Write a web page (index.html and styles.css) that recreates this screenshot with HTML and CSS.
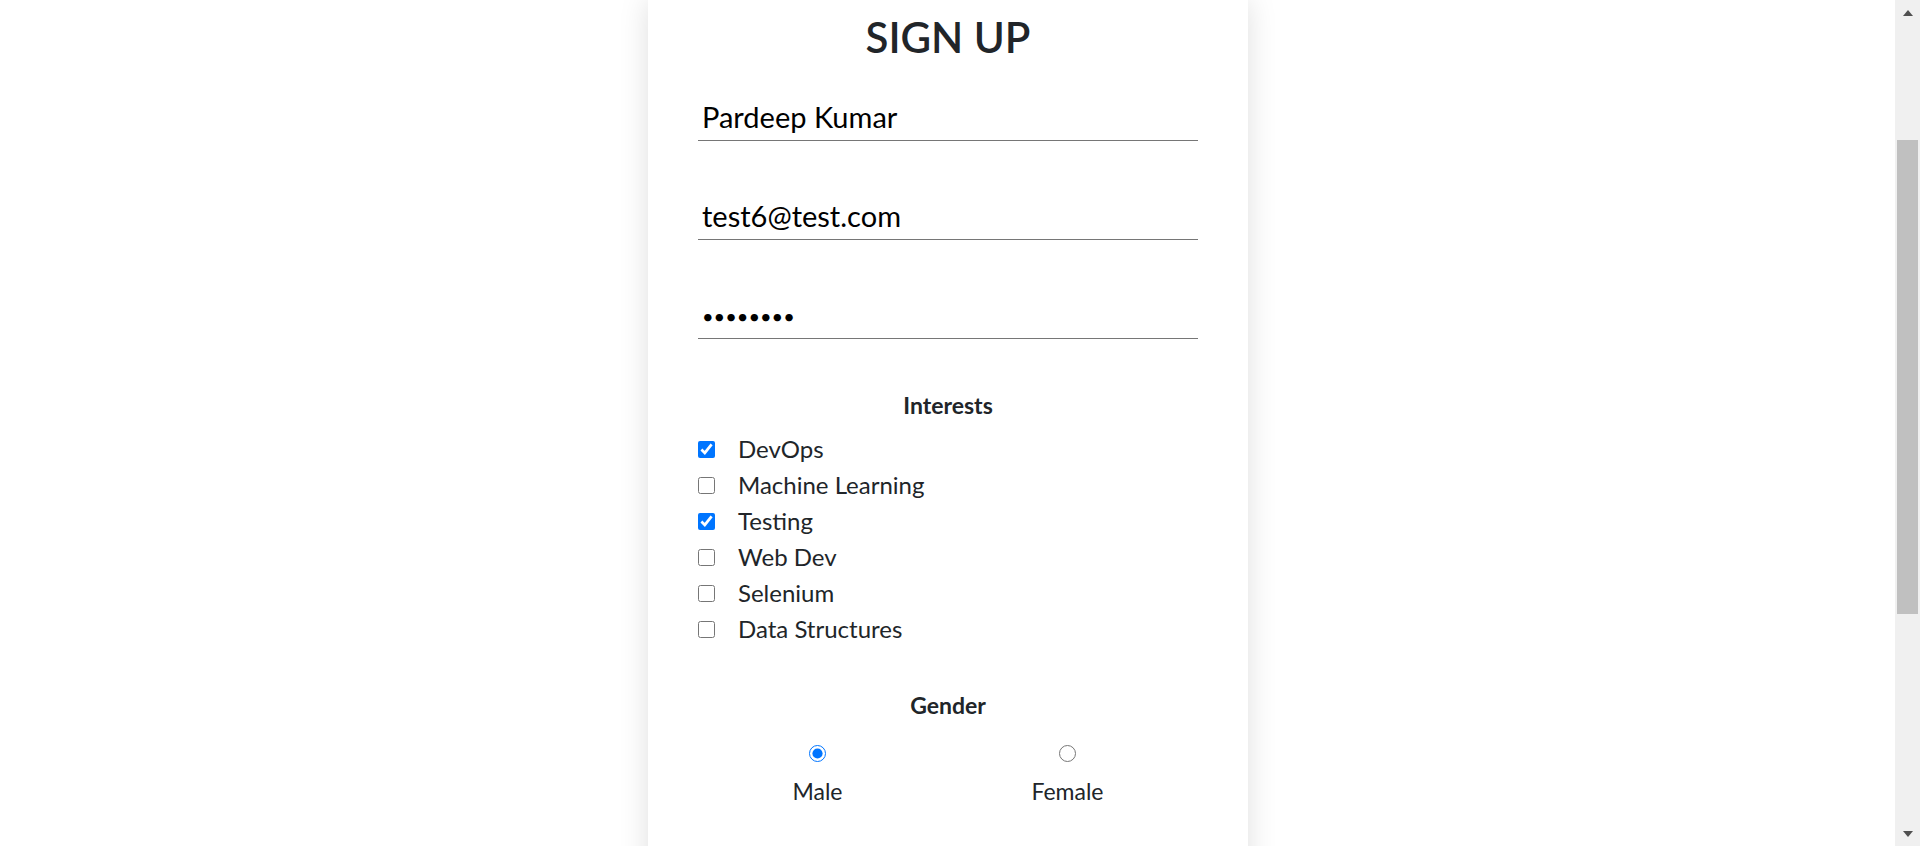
FILE: index.html
```html
<!DOCTYPE html>
<html lang="en">
<head>
<meta charset="utf-8">
<title>Sign Up</title>
<link rel="stylesheet" href="styles.css">
</head>
<body>
<div class="window">
  <main class="page">
    <form class="card">
      <h1 class="title">SIGN UP</h1>
      <input class="field" type="text" value="Pardeep Kumar">
      <input class="field" type="email" value="test6@test.com">
      <input class="field field-password" type="password" value="password">

      <h2 class="section-title interests-title">Interests</h2>
      <div class="checks">
        <label class="check"><input type="checkbox" checked><span>DevOps</span></label>
        <label class="check"><input type="checkbox"><span>Machine Learning</span></label>
        <label class="check"><input type="checkbox" checked><span>Testing</span></label>
        <label class="check"><input type="checkbox"><span>Web Dev</span></label>
        <label class="check"><input type="checkbox"><span>Selenium</span></label>
        <label class="check"><input type="checkbox"><span>Data Structures</span></label>
      </div>

      <h2 class="section-title gender-title">Gender</h2>
      <div class="radios">
        <label class="radio"><input type="radio" name="gender" checked><span>Male</span></label>
        <label class="radio"><input type="radio" name="gender"><span>Female</span></label>
      </div>
    </form>
  </main>
  <div class="scrollbar">
    <div class="sb-btn"><span class="arrow-up"></span></div>
    <div class="sb-track"><div class="sb-thumb"></div></div>
    <div class="sb-btn"><span class="arrow-down"></span></div>
  </div>
</div>
</body>
</html>
```
FILE: styles.css
```css
* { box-sizing: border-box; }
html, body {
  margin: 0;
  padding: 0;
  height: 846px;
  overflow: hidden;
  background: #ffffff;
}
body {
  font-family: "Lato", "Open Sans", sans-serif;
  color: #212529;
}
.window {
  display: flex;
  height: 846px;
}
.page {
  flex: 1;
  height: 846px;
  overflow: hidden;
  display: flex;
  justify-content: center;
  padding-left: 1px;
}
.card {
  width: 600px;
  min-height: 900px;
  background: #ffffff;
  box-shadow: 0 0 28px rgba(0, 0, 0, 0.13);
  padding: 11px 50px 0 50px;
  display: flex;
  flex-direction: column;
}
.title {
  margin: 0;
  font-size: 42px;
  line-height: 52px;
  font-weight: 600;
  text-align: center;
  color: #212529;
}
.field {
  display: block;
  width: 100%;
  margin: 0 0 54px 0;
  padding: 2px 4px 6px 4px;
  font-family: inherit;
  font-size: 29px;
  line-height: 36px;
  height: 45px;
  color: #000000;
  border: none;
  border-bottom: 1px solid #767676;
  outline: none;
  background: transparent;
}
.field-password {
  font-size: 20px;
  padding-top: 4px;
  padding-bottom: 4px;
}
.title + .field { margin-top: 33px; }
.field:nth-of-type(3) { margin-bottom: 0; }
.section-title {
  margin: 0;
  font-size: 23px;
  line-height: 36px;
  font-weight: 700;
  text-align: center;
  color: #212529;
}
.interests-title { margin-top: 48px; }
.checks {
  display: flex;
  flex-direction: column;
  margin-top: 8px;
}
.check {
  display: flex;
  align-items: center;
  gap: 23px;
  height: 36px;
  font-size: 24px;
  line-height: 36px;
}
.check input {
  width: 17px;
  height: 17px;
  margin: 0;
}
.gender-title { margin-top: 40px; }
.radios {
  display: flex;
  justify-content: space-around;
  margin-top: 22px;
}
.radio {
  display: flex;
  flex-direction: column;
  align-items: center;
  gap: 12px;
  font-size: 23px;
  line-height: 34px;
}
.radio input {
  width: 17px;
  height: 17px;
  margin: 0;
}
.scrollbar {
  width: 25px;
  height: 846px;
  background: #f0f0f0;
  display: flex;
  flex-direction: column;
}
.sb-btn {
  height: 25px;
  display: flex;
  align-items: center;
  justify-content: center;
}
.arrow-up {
  width: 0;
  height: 0;
  border-left: 5.5px solid transparent;
  border-right: 5.5px solid transparent;
  border-bottom: 6px solid #505050;
}
.arrow-down {
  width: 0;
  height: 0;
  border-left: 5.5px solid transparent;
  border-right: 5.5px solid transparent;
  border-top: 6px solid #505050;
}
.sb-track {
  flex: 1;
  padding: 115px 2px 0 2px;
}
.sb-thumb {
  height: 474px;
  background: #c0c0c0;
}
```
